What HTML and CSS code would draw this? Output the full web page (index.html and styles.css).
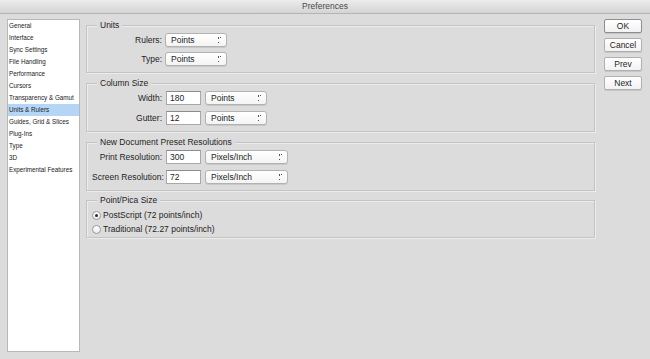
FILE: index.html
```html
<!DOCTYPE html>
<html lang="en">
<head>
  <meta charset="UTF-8" />
  <title>Preferences</title>
  <link rel="stylesheet" href="styles.css">
</head>
<body>
  <div class="window">
    <header class="titlebar">Preferences</header>

    <div class="content">
      <!-- Category list -->
      <ul class="sidebar">
        <li>General</li>
        <li>Interface</li>
        <li>Sync Settings</li>
        <li>File Handling</li>
        <li>Performance</li>
        <li>Cursors</li>
        <li>Transparency &amp; Gamut</li>
        <li class="selected">Units &amp; Rulers</li>
        <li>Guides, Grid &amp; Slices</li>
        <li>Plug-Ins</li>
        <li>Type</li>
        <li>3D</li>
        <li>Experimental Features</li>
      </ul>

      <main class="panel">
        <section class="group">
          <div class="group-title">Units</div>
          <div class="rows">
            <div class="row">
              <span class="label">Rulers:</span>
              <span class="select">Points</span>
            </div>
            <div class="row">
              <span class="label">Type:</span>
              <span class="select">Points</span>
            </div>
          </div>
        </section>

        <section class="group">
          <div class="group-title">Column Size</div>
          <div class="rows fields">
            <div class="row">
              <span class="label">Width:</span>
              <span class="field">180</span>
              <span class="select">Points</span>
            </div>
            <div class="row">
              <span class="label">Gutter:</span>
              <span class="field">12</span>
              <span class="select">Points</span>
            </div>
          </div>
        </section>

        <section class="group">
          <div class="group-title">New Document Preset Resolutions</div>
          <div class="rows fields">
            <div class="row">
              <span class="label">Print Resolution:</span>
              <span class="field">300</span>
              <span class="select wide">Pixels/Inch</span>
            </div>
            <div class="row">
              <span class="label">Screen Resolution:</span>
              <span class="field">72</span>
              <span class="select wide">Pixels/Inch</span>
            </div>
          </div>
        </section>

        <section class="group radio-group">
          <div class="group-title">Point/Pica Size</div>
          <div class="radios">
            <label class="radio checked"><span class="dot"></span>PostScript (72 points/inch)</label>
            <label class="radio"><span class="dot"></span>Traditional (72.27 points/inch)</label>
          </div>
        </section>
      </main>

      <div class="buttons">
        <button class="default">OK</button>
        <button>Cancel</button>
        <button>Prev</button>
        <button>Next</button>
      </div>
    </div>
  </div>
</body>
</html>
```

FILE: styles.css
```css
/* Mac-style preferences dialog */
* {
  margin: 0;
  padding: 0;
  box-sizing: border-box;
}
body {
  background: #dcdcdc;
  color: #1e1e1e;
  font-family: 'Liberation Sans', Arial, sans-serif;
  font-size: 8.5px;
  width: 650px;
  height: 359px;
  overflow: hidden;
}
.titlebar {
  height: 14px;
  line-height: 13px;
  text-align: center;
  color: #4a4a4a;
  background: linear-gradient(#ececec, #d4d4d4);
  border-bottom: 1px solid #b4b4b4;
}
.content {
  display: flex;
  padding: 5px 0 0 7px;
}

/* sidebar list */
.sidebar {
  list-style: none;
  width: 73px;
  height: 333px;
  background: #fff;
  border: 1px solid #b8b8b8;
  font-size: 6.3px;
  color: #222;
}
.sidebar li {
  height: 12px;
  line-height: 12px;
  padding-left: 1px;
  white-space: nowrap;
}
.sidebar li.selected {
  background: #b5d5f6;
}

/* groups */
.panel {
  width: 509px;
  margin: 6px 0 0 6px;
}
.group {
  border: 1px solid #c4c4c4;
  box-shadow: 1px 1px 0 #ececec, inset 1px 1px 0 #ececec;
  padding: 0 5px 6px;
  margin-bottom: 10px;
}
.group.radio-group {
  margin-top: -1px;
  padding-bottom: 1px;
}
.group-title {
  width: fit-content;
  margin: -6px 0 0 5px;
  padding: 0 3px;
  line-height: 11px;
  background: #dcdcdc;
}
.rows {
  display: flex;
  flex-direction: column;
  gap: 5px;
  padding-top: 2px;
}
.rows.fields {
  gap: 6px;
}
.row {
  display: flex;
  align-items: center;
  height: 14px;
}
.label {
  width: 73px;
  text-align: right;
  padding-right: 3px;
  white-space: nowrap;
}
.field {
  width: 35px;
  height: 14px;
  line-height: 12px;
  padding-left: 3px;
  background: #fff;
  border: 1px solid #a8a8a8;
  border-top-color: #8c8c8c;
  margin: 0 4px 0 1px;
}
.select {
  position: relative;
  width: 62px;
  height: 14px;
  line-height: 12px;
  padding-left: 5px;
  background: linear-gradient(#ffffff, #f4f4f4);
  border: 1px solid #b2b2b2;
  border-radius: 3px;
  box-shadow: 0 1px 0 #c8c8c8;
}
.select::after {
  content: '';
  position: absolute;
  right: 5px;
  top: 3px;
  width: 3px;
  height: 6px;
  background:
    linear-gradient(to top left, transparent 50%, #555 50%) 0 0 / 1.5px 2.5px no-repeat,
    linear-gradient(to top right, transparent 50%, #555 50%) 1.5px 0 / 1.5px 2.5px no-repeat,
    linear-gradient(to bottom left, transparent 50%, #555 50%) 0 3.5px / 1.5px 2.5px no-repeat,
    linear-gradient(to bottom right, transparent 50%, #555 50%) 1.5px 3.5px / 1.5px 2.5px no-repeat;
}
.select.wide {
  width: 83px;
}

/* radios */
.radios {
  display: flex;
  flex-direction: column;
  padding-top: 2px;
}
.radio {
  display: flex;
  align-items: center;
  height: 14px;
  gap: 2px;
}
.dot {
  width: 9px;
  height: 9px;
  border-radius: 50%;
  border: 1px solid #9a9a9a;
  background: linear-gradient(#ffffff, #ececec);
  display: flex;
  align-items: center;
  justify-content: center;
}
.radio.checked .dot::after {
  content: '';
  width: 3px;
  height: 3px;
  border-radius: 50%;
  background: #2a2a2a;
}

/* right buttons */
.buttons {
  display: flex;
  flex-direction: column;
  gap: 5px;
  margin-left: 9px;
}
.buttons button {
  width: 38px;
  height: 14px;
  font: inherit;
  color: #1e1e1e;
  background: linear-gradient(#ffffff, #f2f2f2);
  border: 1px solid #b0b0b0;
  border-radius: 2px;
  box-shadow: 0 1px 0 #c6c6c6;
}
.buttons button.default {
  border-color: #8e8e8e;
}
```
